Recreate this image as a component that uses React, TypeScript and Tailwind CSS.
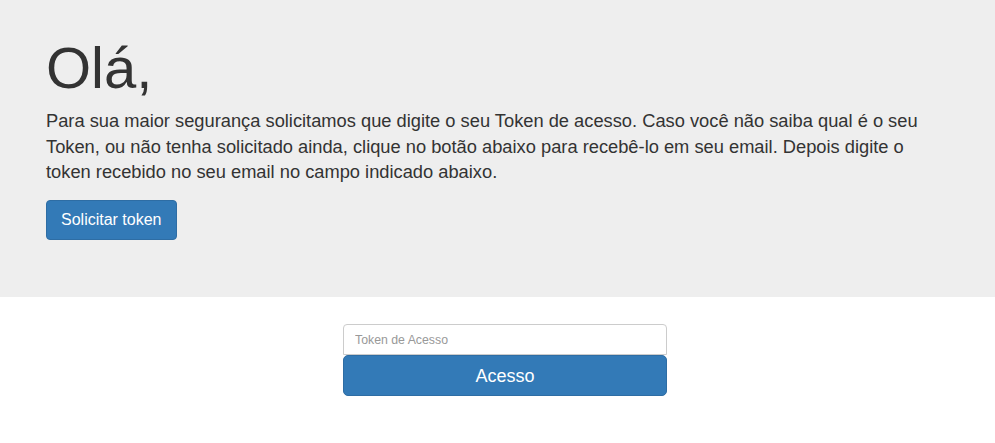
import React from "react";

export default function App() {
  return (
    <div className="min-h-[443px] bg-white text-[#333333]" style={{ fontFamily: '"Liberation Sans", Arial, Helvetica, sans-serif' }}>
      <div className="bg-[#eeeeee] px-[46px] pt-[37px] h-[297px]">
        <h1 className="text-[58px] leading-[62px] font-normal m-0">Olá,</h1>
        <p className="mt-[9px] mb-[15px] text-[18.3px] leading-[25.7px]">
          Para sua maior segurança solicitamos que digite o seu Token de acesso. Caso você não saiba qual é o seu Token, ou não tenha solicitado ainda, clique no botão abaixo para recebê-lo em seu email. Depois digite o token recebido no seu email no campo indicado abaixo.
        </p>
        <button className="h-[40px] px-[14px] text-[16px] leading-[22px] text-white bg-[#337ab7] border border-[#2e6da4] rounded-[4px]">
          Solicitar token
        </button>
      </div>
      <div className="pt-[27px] pl-[343px]">
        <div className="w-[324px] flex flex-col">
          <input
            placeholder="Token de Acesso"
            className="h-[31px] px-[11px] text-[12.3px] border border-[#cccccc] rounded-t-[4px] bg-white outline-none placeholder:text-[#999999]"
          />
          <button className="h-[41px] pt-[1px] text-[18px] text-white bg-[#337ab7] border border-[#2e6da4] rounded-[5px]">
            Acesso
          </button>
        </div>
      </div>
    </div>
  );
}
